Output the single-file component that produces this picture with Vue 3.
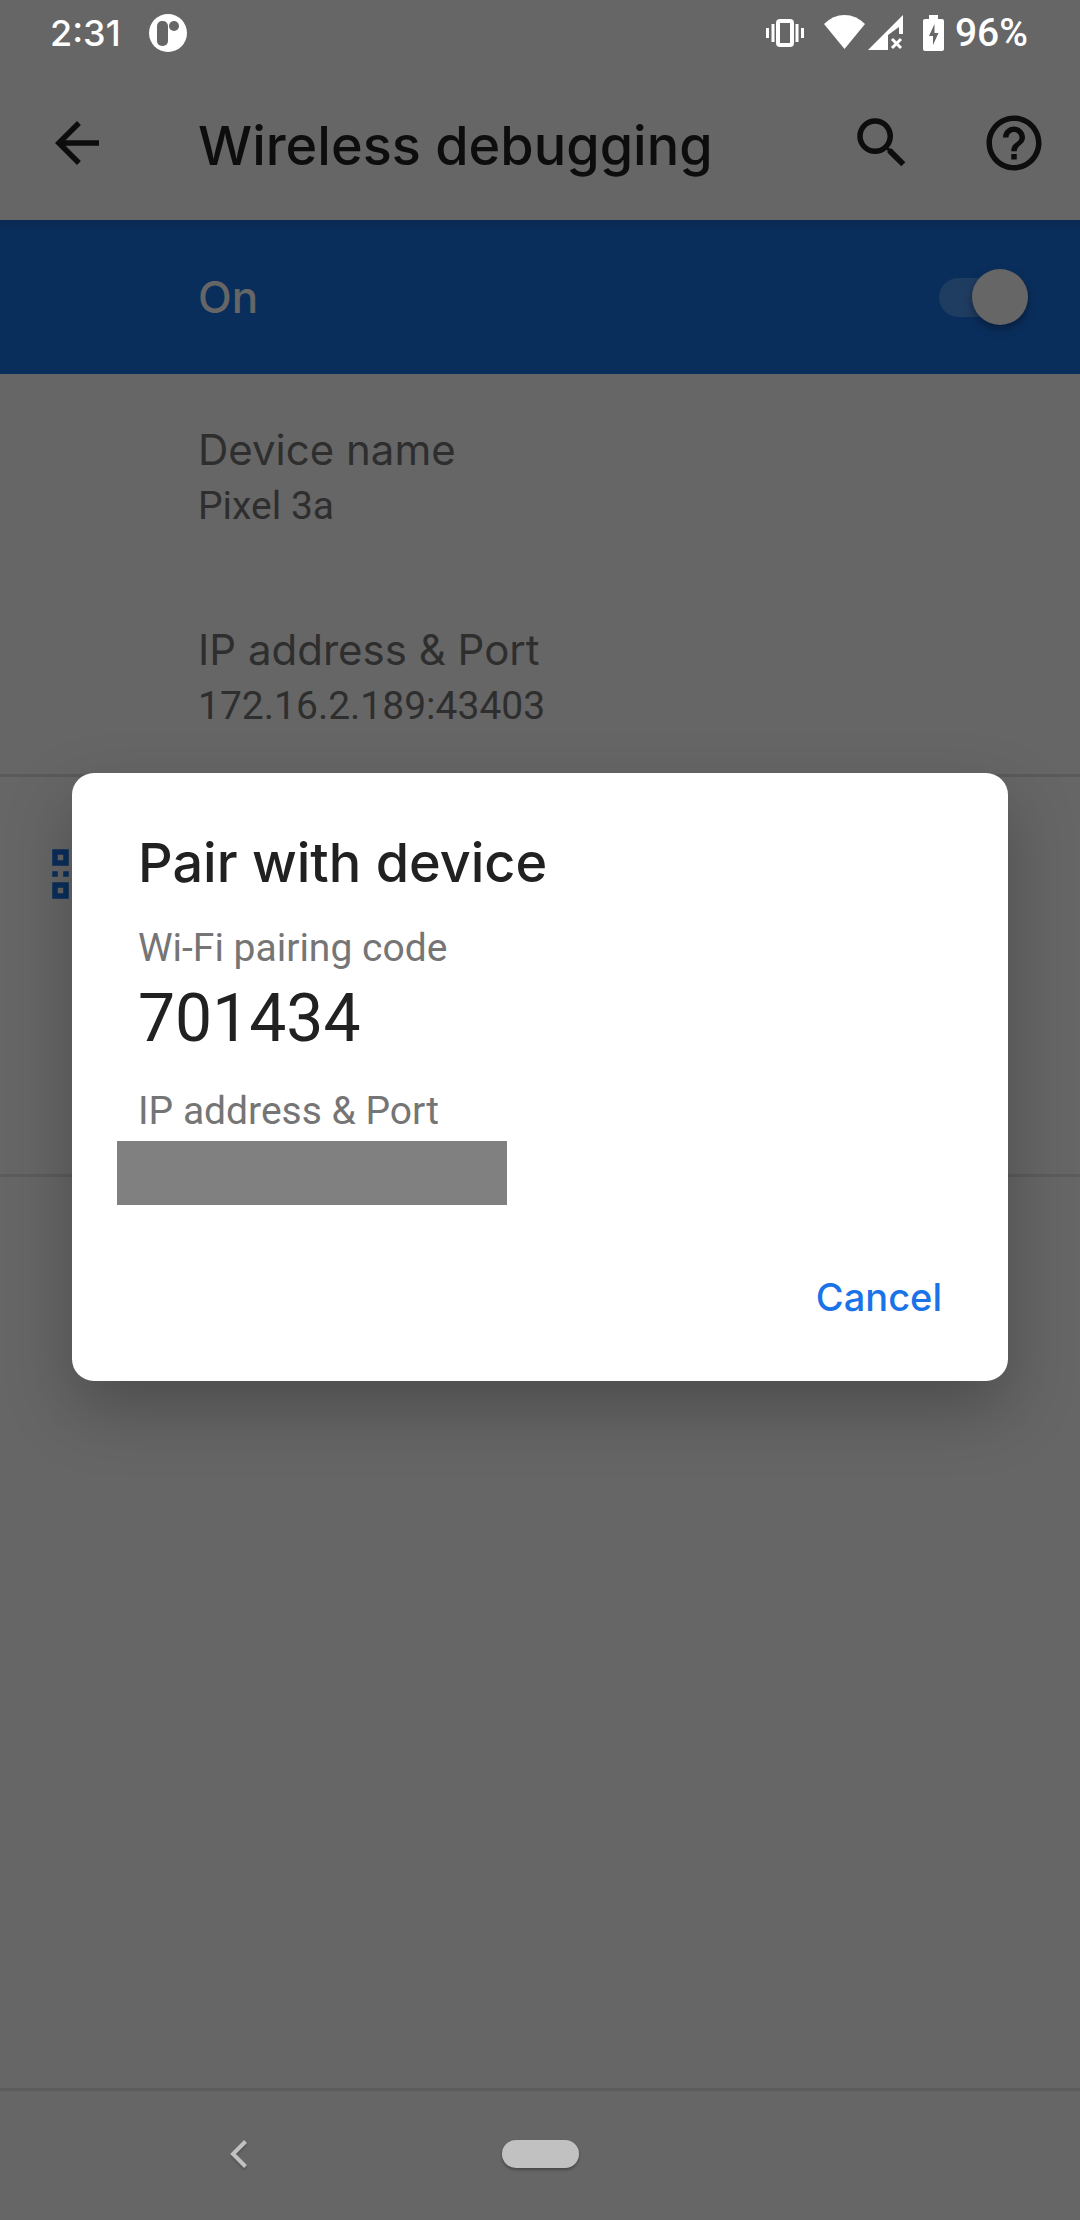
<script setup>
import { ref } from 'vue'

const enabled = ref(true)
const dialogOpen = ref(true)

const details = [
  { label: 'Device name', value: 'Pixel 3a' },
  { label: 'IP address & Port', value: '172.16.2.189:43403' },
]
</script>

<template>
  <div class="screen">
    <header class="status-bar">
      <span class="time">2:31</span>
      <svg class="app-badge" viewBox="0 0 38 38" width="38" height="38" aria-hidden="true">
        <circle cx="19" cy="19" r="19" fill="#fff" />
        <rect x="8" y="7" width="11" height="25" rx="5" fill="#666" />
        <circle cx="25" cy="12" r="5" fill="#666" />
      </svg>
      <div class="indicators">
        <svg class="vibrate" viewBox="0 0 38 28" width="38" height="28" aria-hidden="true">
          <rect x="12" y="2" width="14" height="24" rx="2" fill="none" stroke="#fff" stroke-width="4" />
          <path d="M1.500 9v10M7 5v18M31 5v18M36.500 9v10" stroke="#fff" stroke-width="3" />
        </svg>
        <svg class="wifi" viewBox="0 0 41 36" width="41" height="36" aria-hidden="true">
          <path d="M0 9Q9 0 20.500 0T41 9L20.500 34z" fill="#fff" />
        </svg>
        <svg class="signal" viewBox="0 0 36 36" width="36" height="36" aria-hidden="true">
          <path d="M35 0v19h-4V12L20 20v15H0z" fill="#fff" />
          <path d="M24 24l9 9M33 24l-9 9" stroke="#fff" stroke-width="3" />
        </svg>
        <svg class="battery" viewBox="0 0 21 36" width="21" height="36" aria-hidden="true">
          <path d="M6 0h9v4h4a2 2 0 0 1 2 2v28a2 2 0 0 1-2 2H2a2 2 0 0 1-2-2V6a2 2 0 0 1 2-2h4z" fill="#fff" />
          <path d="M11.500 9L6 21h4v9l5.500-12h-4z" fill="#666" />
        </svg>
        <span class="percent">96%</span>
      </div>
    </header>

    <div class="toolbar">
      <button class="icon-button" type="button" aria-label="Back">
        <svg viewBox="0 0 24 24" width="66" height="66">
          <path d="M20 11H7.830l5.590-5.590L12 4l-8 8 8 8 1.410-1.410L7.830 13H20v-2z" fill="#0d0d0d" />
        </svg>
      </button>
      <h1>Wireless debugging</h1>
      <button class="icon-button" type="button" aria-label="Search">
        <svg viewBox="0 0 24 24" width="66" height="66">
          <path d="M15.500 14h-.79l-.28-.27A6.471 6.471 0 0 0 16 9.500 6.500 6.500 0 1 0 9.500 16c1.610 0 3.090-.59 4.230-1.570l.27.28v.79l5 4.990L20.490 19l-4.990-5zm-6 0C7.010 14 5 11.990 5 9.500S7.010 5 9.500 5 14 7.010 14 9.500 11.990 14 9.500 14z" fill="#0d0d0d" />
        </svg>
      </button>
      <button class="icon-button" type="button" aria-label="Help">
        <svg viewBox="0 0 24 24" width="66" height="66">
          <path d="M11 18h2v-2h-2v2zm1-16C6.480 2 2 6.480 2 12s4.480 10 10 10 10-4.480 10-10S17.520 2 12 2zm0 18c-4.410 0-8-3.590-8-8s3.590-8 8-8 8 3.590 8 8-3.590 8-8 8zm0-14c-2.210 0-4 1.790-4 4h2c0-1.100.9-2 2-2s2 .9 2 2c0 2-3 1.750-3 5h2c0-2.250 3-2.500 3-5 0-2.210-1.790-4-4-4z" fill="#0d0d0d" />
        </svg>
      </button>
    </div>

    <label class="master-switch" for="debugging-switch">
      <span>{{ enabled ? 'On' : 'Off' }}</span>
      <input id="debugging-switch" v-model="enabled" type="checkbox" role="switch" />
    </label>

    <main class="content">
      <dl class="details">
        <div v-for="item in details" :key="item.label" class="detail">
          <dt>{{ item.label }}</dt>
          <dd>{{ item.value }}</dd>
        </div>
      </dl>
      <section class="pairing">
        <svg viewBox="0 0 24 24" width="66" height="66" aria-hidden="true">
          <path fill-rule="evenodd" fill="#0a2e5c" d="M3 3h6v6H3zM5 5v2h2V5zM3 15h6v6H3zM5 17v2h2v-2zM15 3h6v6h-6zM17 5v2h2V5zM3 11h2v2H3zM7 11h2v2H7zM11 11h2v2h-2zM15 11h2v2h-2zM19 11h2v2h-2zM11 3h2v6h-2zM15 15h2v2h-2zM19 15h2v2h-2zM11 15h2v6h-2zM17 17h2v2h-2zM15 19h2v2h-2zM19 19h2v2h-2z" />
        </svg>
      </section>
    </main>

    <nav class="nav-bar">
      <button class="nav-back" type="button" aria-label="Back">
        <svg viewBox="0 0 18 28" width="18" height="28">
          <path d="M15.500 1.500L3 14l12.500 12.500" fill="none" stroke="#c1c1c1" stroke-width="4" />
        </svg>
      </button>
      <button class="nav-home" type="button" aria-label="Home"></button>
    </nav>

    <div v-if="dialogOpen" class="dialog-layer">
      <section class="dialog" role="dialog" aria-modal="true" aria-labelledby="dialog-title">
        <h2 id="dialog-title">Pair with device</h2>
        <p class="caption">Wi-Fi pairing code</p>
        <p class="code">701434</p>
        <p class="caption">IP address &amp; Port</p>
        <div class="redacted"></div>
        <button class="cancel" type="button" @click="dialogOpen = false">Cancel</button>
      </section>
    </div>
  </div>
</template>

<style>
body {
  margin: 0;
  background: #666;
}
</style>

<style scoped>
.screen {
  --display: Inter, 'Liberation Sans', sans-serif;

  position: relative;
  display: flex;
  flex-direction: column;
  min-height: 100vh;
  background: #666;
  font-family: Roboto, 'Liberation Sans', sans-serif;
}

button {
  padding: 0;
  border: 0;
  background: none;
  font: inherit;
}

svg {
  display: block;
}

h1,
h2,
p,
dl,
dd {
  margin: 0;
}

.status-bar {
  display: flex;
  align-items: center;
  box-sizing: border-box;
  height: 66px;
  padding: 0 52px 0 50px;
  color: #fff;
  font-weight: 500;
}

.time {
  font-family: var(--display);
  font-size: 36px;
}

.percent {
  font-size: 39px;
}

.app-badge {
  margin-left: 28px;
}

.indicators {
  display: flex;
  align-items: center;
  margin-left: auto;
}

.wifi {
  margin-left: 20px;
}

.signal {
  margin-left: 3px;
}

.battery {
  margin: 0 11px 0 19px;
}

.toolbar {
  display: flex;
  align-items: center;
  box-sizing: border-box;
  height: 154px;
  padding: 0 33px 0 44px;
  gap: 66px;
}

.toolbar h1 {
  flex: 1;
  margin-left: 22px;
  padding-top: 6px;
  color: #0d0d0d;
  font-family: var(--display);
  font-size: 54px;
  font-weight: 500;
  line-height: 64px;
  white-space: nowrap;
}

.master-switch {
  display: flex;
  align-items: center;
  justify-content: space-between;
  box-sizing: border-box;
  height: 154px;
  padding: 0 52px 0 198px;
  background: linear-gradient(#0a2850, #0a2e5c 12px);
  color: #666;
  font-family: var(--display);
  font-size: 44px;
  font-weight: 500;
}

.master-switch input {
  display: grid;
  align-items: center;
  width: 89px;
  height: 56px;
  margin: 0;
  appearance: none;
}

.master-switch input::before,
.master-switch input::after {
  grid-area: 1 / 1;
  content: '';
}

.master-switch input::before {
  width: 80px;
  height: 39px;
  border-radius: 20px;
  background: #1f3c61;
}

.master-switch input::after {
  justify-self: start;
  width: 56px;
  height: 56px;
  border-radius: 50%;
  background: #666;
  box-shadow: 0 4px 8px rgba(0, 0, 0, 0.35);
}

.master-switch input:checked::after {
  justify-self: end;
}

.content {
  flex: 1;
}

.details {
  border-bottom: 3px solid #5a5a5a;
  color: #2e2e2e;
}

.detail {
  padding: 47px 44px 41px 198px;
}

.detail dt {
  font-family: var(--display);
  font-size: 42px;
  line-height: 58px;
}

.detail dd {
  font-size: 39px;
  line-height: 54px;
}

.pairing {
  box-sizing: border-box;
  height: 400px;
  padding: 64px 44px;
  border-bottom: 3px solid #5a5c5d;
}

.nav-bar {
  display: grid;
  grid-template-columns: 1fr auto 1fr;
  align-items: center;
  box-sizing: border-box;
  height: 132px;
  padding-bottom: 3px;
  border-top: 3px solid #5c5c5c;
}

.nav-back {
  justify-self: center;
  margin-right: 24px;
  filter: drop-shadow(0 2px 1px rgba(0, 0, 0, 0.2));
}

.nav-home {
  width: 77px;
  height: 28px;
  border-radius: 14px;
  background: #c1c1c1;
  box-shadow: 0 2px 3px rgba(0, 0, 0, 0.3);
}

.dialog-layer {
  position: absolute;
  inset: 66px 0 132px;
  display: grid;
  align-items: center;
  padding: 0 72px;
}

.dialog {
  display: flex;
  flex-direction: column;
  align-items: flex-start;
  padding: 58px 66px 61px;
  border-radius: 22px;
  background: #fff;
  box-shadow: 0 28px 66px rgba(0, 0, 0, 0.25);
}

.dialog h2 {
  color: #212121;
  font-family: var(--display);
  font-size: 54px;
  font-weight: 500;
  line-height: 64px;
}

.caption {
  margin-top: 30px;
  color: #757575;
  font-size: 39px;
  line-height: 46px;
}

.code {
  margin-top: 9px;
  color: #212121;
  font-size: 66px;
  line-height: 78px;
}

.redacted {
  width: 390px;
  height: 64px;
  margin: 7px 0 69px -21px;
  background: #808080;
}

.cancel {
  align-self: flex-end;
  color: #1a73e8;
  font-family: var(--display);
  font-size: 38px;
  font-weight: 500;
  line-height: 46px;
}
</style>
